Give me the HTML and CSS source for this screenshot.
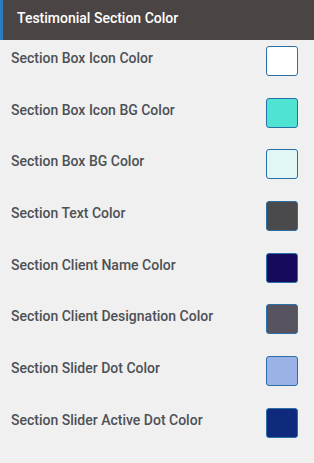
FILE: index.html
```html
<!DOCTYPE html>
<html>
<head>
<meta charset="utf-8">
<link rel="stylesheet" href="styles.css">
</head>
<body>
<div class="panel">
  <div class="header">Testimonial Section Color</div>
  <div class="rows">
    <div class="row"><span class="label">Section Box Icon Color</span><span class="swatch c1"></span></div>
    <div class="row"><span class="label">Section Box Icon BG Color</span><span class="swatch c2"></span></div>
    <div class="row"><span class="label">Section Box BG Color</span><span class="swatch c3"></span></div>
    <div class="row"><span class="label">Section Text Color</span><span class="swatch c4"></span></div>
    <div class="row"><span class="label">Section Client Name Color</span><span class="swatch c5"></span></div>
    <div class="row"><span class="label">Section Client Designation Color</span><span class="swatch c6"></span></div>
    <div class="row"><span class="label">Section Slider Dot Color</span><span class="swatch c7"></span></div>
    <div class="row"><span class="label">Section Slider Active Dot Color</span><span class="swatch c8"></span></div>
  </div>
</div>
</body>
</html>
```

FILE: styles.css
```css
html, body {
  margin: 0;
  padding: 0;
  background: #f0f0f0;
}
body {
  font-family: Roboto, "Liberation Sans", sans-serif;
  width: 314px;
  height: 463px;
  overflow: hidden;
}
.header {
  height: 40px;
  box-sizing: border-box;
  background: #4a4544;
  border-left: 3px solid #2a7bbf;
  color: #ffffff;
  font-size: 14px;
  font-weight: 500;
  padding-left: 14px;
  line-height: 36px;
}
.rows {
  display: flex;
  flex-direction: column;
  padding-top: 6px;
}
.row {
  height: 51.7px;
  display: flex;
  align-items: flex-start;
  justify-content: space-between;
  padding-left: 11px;
  padding-right: 16px;
}
.label {
  color: #4d5055;
  font-size: 14px;
  font-weight: 500;
  line-height: 22px;
  margin-top: 1px;
}
.swatch {
  width: 32px;
  height: 30px;
  box-sizing: border-box;
  border: 1px solid #2a6fa8;
  border-radius: 3px;
}
.c1 { background: #ffffff; }
.c2 { background: #4fe3d1; }
.c3 { background: #e0f7f5; }
.c4 { background: #4a4a4c; }
.c5 { background: #150a5c; }
.c6 { background: #56535f; }
.c7 { background: #9ab2e5; }
.c8 { background: #0f2a7c; }
```
